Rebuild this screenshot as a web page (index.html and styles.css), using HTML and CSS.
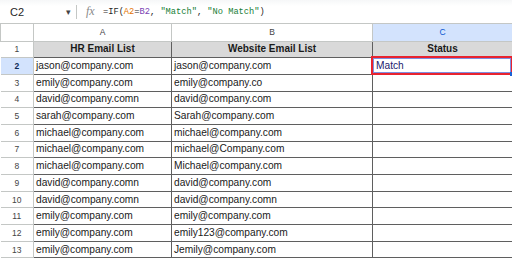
FILE: index.html
```html
<!DOCTYPE html>
<html lang="en">
<head>
    <meta charset="UTF-8">
    <title>Email Match Sheet</title>
    <link rel="stylesheet" href="styles.css">
</head>
<body>
    <div class="formula-bar">
        <div class="name-box">C2</div>
        <span class="caret">&#9662;</span>
        <span class="divider"></span>
        <span class="fx"><i>fx</i></span>
        <div class="formula">=IF(<span class="ref-a">A2</span>=<span class="ref-b">B2</span>, <span class="str">"Match"</span>, <span class="str">"No Match"</span>)</div>
    </div>

    <table class="sheet">
        <colgroup>
            <col class="c-num">
            <col class="c-a">
            <col class="c-b">
            <col class="c-c">
        </colgroup>
        <tr class="col-head">
            <th class="corner"></th>
            <th>A</th>
            <th>B</th>
            <th class="active">C</th>
        </tr>
        <tr class="title-row">
            <td class="num">1</td>
            <td class="marquee">HR Email List</td>
            <td class="marquee">Website Email List</td>
            <td>Status</td>
        </tr>
        <tr>
            <td class="num active">2</td>
            <td>jason@company.com</td>
            <td>jason@company.com</td>
            <td class="selected"><span class="sel-box"></span>Match</td>
        </tr>
        <tr><td class="num">3</td><td>emily@company.com</td><td>emily@company.co</td><td></td></tr>
        <tr><td class="num">4</td><td>david@company.comn</td><td>david@company.com</td><td></td></tr>
        <tr><td class="num">5</td><td>sarah@company.com</td><td>Sarah@company.com</td><td></td></tr>
        <tr><td class="num">6</td><td>michael@company.com</td><td>michael@company.com</td><td></td></tr>
        <tr><td class="num">7</td><td>michael@company.com</td><td>michael@Company.com</td><td></td></tr>
        <tr><td class="num">8</td><td>michael@company.com</td><td>Michael@company.com</td><td></td></tr>
        <tr><td class="num">9</td><td>david@company.comn</td><td>david@company.com</td><td></td></tr>
        <tr><td class="num">10</td><td>david@company.comn</td><td>david@company.comn</td><td></td></tr>
        <tr><td class="num">11</td><td>emily@company.com</td><td>emily@company.com</td><td></td></tr>
        <tr><td class="num">12</td><td>emily@company.com</td><td>emily123@company.com</td><td></td></tr>
        <tr><td class="num">13</td><td>emily@company.com</td><td>Jemily@company.com</td><td></td></tr>
    </table>
</body>
</html>
```

FILE: styles.css
```css
/* Page */
body {
    margin: 0;
    font-family: "Liberation Sans", Arial, sans-serif;
    background: #fff;
    overflow: hidden;
}

/* Formula bar */
.formula-bar {
    height: 23px;
    display: flex;
    align-items: center;
    border-bottom: 1px solid #c4c7c5;
    background: linear-gradient(#f6f7f8 0, #fff 6px);
    color: #1f1f1f;
}

.name-box {
    width: 56px;
    padding-left: 10px;
    font-size: 11px;
}

.caret {
    font-size: 9px;
    color: #444;
    width: 10px;
}

.divider {
    width: 1px;
    height: 14px;
    background: #c4c7c5;
    margin-right: 9px;
}

.fx {
    font-family: "Liberation Serif", serif;
    font-size: 12px;
    color: #8a8a8a;
    width: 17px;
}

.formula {
    font-family: "Liberation Mono", monospace;
    font-size: 8.7px;
    color: #1f1f1f;
    white-space: nowrap;
}

.ref-a { color: #e37400; }
.ref-b { color: #7b3fb3; }
.str { color: #188038; }

/* Grid */
.sheet {
    border-collapse: collapse;
    table-layout: fixed;
    width: 512px;
}

.c-num { width: 33px; }
.c-a { width: 138px; }
.c-b { width: 201px; }
.c-c { width: 140px; }

.sheet tr {
    height: 16.7px;
}

.sheet td {
    padding: 0 0 0 2px;
    font-size: 10.2px;
    color: #1a1a1a;
    border: 1px solid #5f5f5f;
    white-space: nowrap;
    overflow: hidden;
    line-height: 14px;
}

.col-head {
    height: 17px !important;
}

.col-head th {
    font-weight: normal;
    font-size: 8.5px;
    color: #444;
    background: #fff;
    border: 1px solid #c4c7c5;
    border-top: none;
    padding: 0;
}

.col-head th.active {
    background: #d3e3fd;
    color: #0b57d0;
}

.sheet td.num {
    text-align: center;
    font-size: 8.5px;
    color: #444;
    border: 1px solid #c4c7c5;
    border-left: none;
    padding: 0;
}

.sheet td.num.active {
    background: #d3e3fd;
    color: #0b2a55;
    font-weight: bold;
}

.title-row td {
    background: #d9d9d9;
    font-weight: bold;
    font-size: 10px;
    text-align: center;
    padding: 0;
}

.title-row td.num {
    background: #fff;
    font-weight: normal;
    font-size: 8.5px;
}

.title-row td.marquee {
    border-bottom: 1px dashed #6aa27a;
}

.sheet td.selected {
    position: relative;
    color: #1c1a6e;
    padding-left: 3px;
    overflow: visible;
}

.sel-box {
    position: absolute;
    left: -2px;
    top: -2px;
    right: -1px;
    bottom: -1px;
    border: 2px solid #e8232f;
    box-shadow: inset 0 0 0 1px #7e8fe0;
}

.sel-box::after {
    content: "";
    position: absolute;
    right: -3px;
    bottom: -3px;
    width: 4px;
    height: 4px;
    background: #1a63d6;
}
```
